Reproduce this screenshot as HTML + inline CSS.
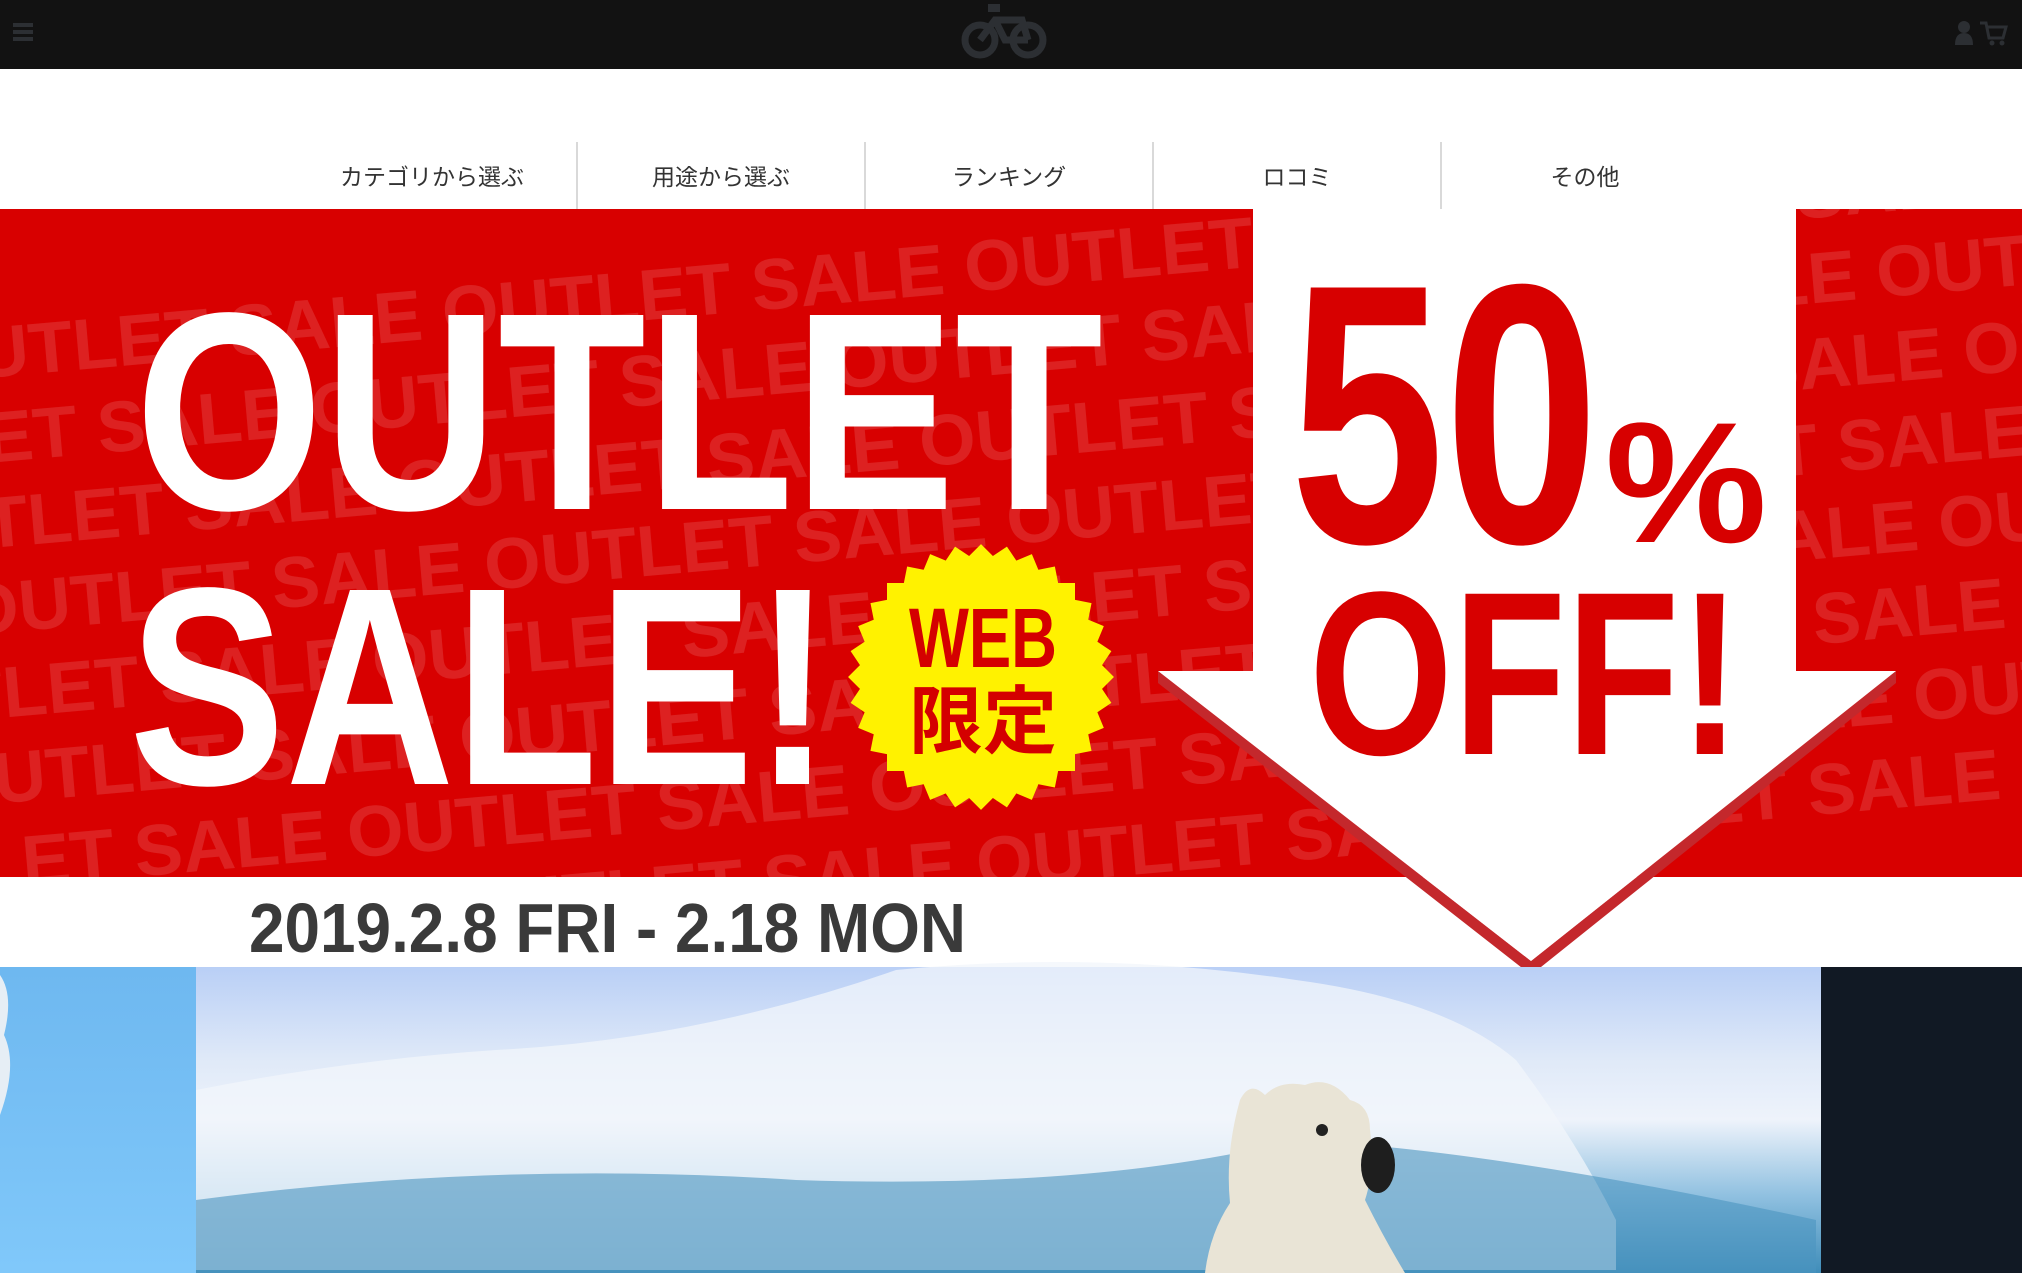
<!DOCTYPE html>
<html><head><meta charset="utf-8"><style>
html,body{margin:0;padding:0;width:2022px;height:1273px;overflow:hidden;background:#fff}
svg{display:block}
</style></head><body>
<svg width="2022" height="1273" viewBox="0 0 2022 1273" xmlns="http://www.w3.org/2000/svg">
<defs>
<linearGradient id="sky" x1="0" y1="0" x2="0" y2="1">
<stop offset="0" stop-color="#b9cff6"/><stop offset="0.3" stop-color="#dfe9f8"/><stop offset="0.5" stop-color="#eef3fb"/><stop offset="0.75" stop-color="#8fc0e0"/><stop offset="1" stop-color="#3f8db9"/></linearGradient>
<linearGradient id="lb" x1="0" y1="0" x2="0" y2="1"><stop offset="0" stop-color="#6eb8f0"/><stop offset="1" stop-color="#80c8fa"/></linearGradient>
<clipPath id="bc"><rect x="0" y="209" width="2022" height="668"/></clipPath>
</defs>
<rect x="0" y="0" width="2022" height="69" fill="#121212"/>
<g fill="#2c2f33"><rect x="13" y="23" width="20" height="4"/><rect x="13" y="30" width="20" height="4"/><rect x="13" y="37" width="20" height="4"/></g>
<g fill="none" stroke="#2c2f33" stroke-width="7">
<circle cx="980" cy="40" r="15"/><circle cx="1028" cy="40" r="15"/><path d="M980 40 L995 20 L1022 20 L1028 40 M995 20 L1005 40 L1028 40"/></g>
<rect x="988" y="4" width="12" height="8" fill="#2c2f33"/>
<g fill="#2c2f33"><circle cx="1964" cy="27" r="6"/><path d="M1955 45 q0-12 9-12 q9 0 9 12z"/><path d="M1980 23 h6 l3 15 h14 l3-11 h-18" stroke="#2c2f33" stroke-width="3" fill="none"/><circle cx="1992" cy="43" r="2.5"/><circle cx="2002" cy="43" r="2.5"/></g>
<g stroke="#cccccc" stroke-width="1.5"><line x1="577" y1="142" x2="577" y2="209"/><line x1="865" y1="142" x2="865" y2="209"/><line x1="1153" y1="142" x2="1153" y2="209"/><line x1="1441" y1="142" x2="1441" y2="209"/></g>
<g font-family="Liberation Sans, Noto Sans CJK JP, sans-serif" font-size="23" fill="#333" text-anchor="middle">
<text x="432" y="185">カテゴリから選ぶ</text><text x="721" y="185">用途から選ぶ</text><text x="1009" y="185">ランキング</text><text x="1297" y="185">ロコミ</text><text x="1585" y="185">その他</text></g>
<rect x="0" y="209" width="2022" height="668" fill="#d80000"/>
<g clip-path="url(#bc)" font-family="Liberation Sans, sans-serif" font-weight="bold" font-size="72" fill="#ffffff" fill-opacity="0.13">
<g transform="rotate(-5 1000 540)">
<text x="-60" y="290" textLength="2600" lengthAdjust="spacingAndGlyphs">OUTLET SALE OUTLET SALE OUTLET SALE OUTLET SALE OUTLET SALE</text>
<text x="-200" y="375" textLength="2600" lengthAdjust="spacingAndGlyphs">OUTLET SALE OUTLET SALE OUTLET SALE OUTLET SALE OUTLET SALE</text>
<text x="-120" y="460" textLength="2600" lengthAdjust="spacingAndGlyphs">OUTLET SALE OUTLET SALE OUTLET SALE OUTLET SALE OUTLET SALE</text>
<text x="-40" y="545" textLength="2600" lengthAdjust="spacingAndGlyphs">OUTLET SALE OUTLET SALE OUTLET SALE OUTLET SALE OUTLET SALE</text>
<text x="-160" y="630" textLength="2600" lengthAdjust="spacingAndGlyphs">OUTLET SALE OUTLET SALE OUTLET SALE OUTLET SALE OUTLET SALE</text>
<text x="-80" y="715" textLength="2600" lengthAdjust="spacingAndGlyphs">OUTLET SALE OUTLET SALE OUTLET SALE OUTLET SALE OUTLET SALE</text>
<text x="-200" y="800" textLength="2600" lengthAdjust="spacingAndGlyphs">OUTLET SALE OUTLET SALE OUTLET SALE OUTLET SALE OUTLET SALE</text>
<text x="-100" y="885" textLength="2600" lengthAdjust="spacingAndGlyphs">OUTLET SALE OUTLET SALE OUTLET SALE OUTLET SALE OUTLET SALE</text>
</g></g>
<polygon points="1158,683 1531,975 1896,683 1896,671 1531,961 1158,671" fill="#c4282c"/>
<polygon points="1253,209 1796,209 1796,671 1896,671 1531,961 1158,671 1253,671" fill="#ffffff"/>
<g font-family="Liberation Sans, sans-serif" font-weight="bold">
<text x="135" y="509" font-size="282" fill="#fff" textLength="968" lengthAdjust="spacingAndGlyphs">OUTLET</text>
<text x="129" y="784" font-size="282" fill="#fff" textLength="703" lengthAdjust="spacingAndGlyphs">SALE!</text>
<text x="1290" y="542" font-size="370" fill="#d70000" textLength="309" lengthAdjust="spacingAndGlyphs">50</text>
<text x="1605" y="542" font-size="172" fill="#d70000" textLength="162" lengthAdjust="spacingAndGlyphs">%</text>
<text x="1309" y="754" font-size="233" fill="#d70000" textLength="432" lengthAdjust="spacingAndGlyphs">OFF!</text>
</g>
<g fill="#fff200" transform="translate(981 677)">
<rect x="-94" y="-94" width="188" height="188"/>
<rect x="-94" y="-94" width="188" height="188" transform="rotate(11.25)"/>
<rect x="-94" y="-94" width="188" height="188" transform="rotate(22.5)"/>
<rect x="-94" y="-94" width="188" height="188" transform="rotate(33.75)"/>
<rect x="-94" y="-94" width="188" height="188" transform="rotate(45)"/>
<rect x="-94" y="-94" width="188" height="188" transform="rotate(56.25)"/>
<rect x="-94" y="-94" width="188" height="188" transform="rotate(67.5)"/>
<rect x="-94" y="-94" width="188" height="188" transform="rotate(78.75)"/>
<circle r="112"/>
</g>
<text x="909" y="667" font-family="Liberation Sans, sans-serif" font-weight="bold" font-size="84" fill="#d40000" textLength="148" lengthAdjust="spacingAndGlyphs">WEB</text>
<text x="909" y="747" font-family="Liberation Sans, Noto Sans CJK JP, sans-serif" font-weight="bold" font-size="74" fill="#d40000" textLength="148" lengthAdjust="spacingAndGlyphs">限定</text>
<text x="249" y="952" font-family="Liberation Sans, sans-serif" font-weight="bold" font-size="70" fill="#3a3a3a" textLength="717" lengthAdjust="spacingAndGlyphs">2019.2.8 FRI - 2.18 MON</text>
<rect x="0" y="967" width="196" height="306" fill="url(#lb)"/>
<path d="M0 975 q14 20 4 60 q14 30 -4 80z" fill="#e6eef5"/>
<rect x="196" y="967" width="1625" height="306" fill="url(#sky)"/>
<path d="M196 1090 q150-30 300-40 q200-10 400-80 q200-20 400 10 q150 20 220 80 q60 80 100 160 l0 50 l-1420 0z" fill="#f2f6fb" opacity="0.75"/>
<path d="M196 1200 q300-40 600 -20 q300 10 500 -40 q200 10 520 80 l0 53 l-1620 0z" fill="#4b95c0" opacity="0.6"/>
<path d="M1240 1100 q10-20 25-5 q15-15 40-10 q25-10 45 15 q20 5 20 30 q5 40 -5 70 q20 40 40 73 l-200 0 q5-40 25-70 q-5-50 10-103z" fill="#e9e4d6"/>
<ellipse cx="1378" cy="1165" rx="17" ry="28" fill="#1e1e1e"/>
<circle cx="1322" cy="1130" r="6" fill="#222"/>
<rect x="1821" y="967" width="201" height="306" fill="#111924"/>
</svg>
</body></html>
